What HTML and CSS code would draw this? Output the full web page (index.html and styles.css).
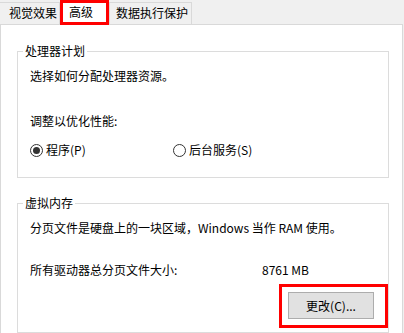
FILE: index.html
```html
<!DOCTYPE html>
<html lang="zh-CN">
<head>
    <meta charset="UTF-8">
    <meta name="viewport" content="width=device-width, initial-scale=1.0">
    <title>性能选项 - 高级</title>
    <link rel="stylesheet" href="styles.css">
</head>
<body>
    <div class="dialog">
        <div class="tabs">
            <div class="tab first">视觉效果</div>
            <div class="tab active">高级</div>
            <div class="tab">数据执行保护</div>
        </div>
        <div class="panel">
            <fieldset class="group cpu">
                <legend>处理器计划</legend>
                <div class="group-body">
                    <div class="line">选择如何分配处理器资源。</div>
                    <div class="line spaced">调整以优化性能:</div>
                    <div class="radios">
                        <label class="radio"><input type="radio" name="sched" checked><span>程序(P)</span></label>
                        <label class="radio"><input type="radio" name="sched"><span>后台服务(S)</span></label>
                    </div>
                </div>
            </fieldset>
            <fieldset class="group memory">
                <legend>虚拟内存</legend>
                <div class="group-body">
                    <div class="line">分页文件是硬盘上的一块区域，Windows 当作 RAM 使用。</div>
                    <div class="line size-row">
                        <span class="size-label">所有驱动器总分页文件大小:</span>
                        <span class="size-value">8761 MB</span>
                    </div>
                    <div class="actions">
                        <div class="highlight">
                            <button class="btn" type="button">更改(C)...</button>
                        </div>
                    </div>
                </div>
            </fieldset>
        </div>
    </div>
</body>
</html>
```

FILE: styles.css
```css
body {
    margin: 0;
    font-family: "Noto Sans CJK SC", "Noto Sans", sans-serif;
    font-size: 12px;
    color: #000;
    background-color: #f0f0f0;
}
.dialog {
    width: 404px;
    height: 333px;
    overflow: hidden;
    background-color: #f0f0f0;
}
.tabs {
    display: flex;
    align-items: flex-end;
    height: 24px;
}
.tab {
    box-sizing: border-box;
    height: 22px;
    line-height: 20px;
    padding: 0 3px 0 6px;
    border: 1px solid #d9d9d9;
    border-bottom: none;
    background-color: #f0f0f0;
    white-space: nowrap;
}
.tab.first {
    padding-left: 9px;
    border-left: none;
    width: 60px;
}
.tab.active {
    position: relative;
    z-index: 1;
    height: 25px;
    margin-bottom: -1px;
    line-height: 17px;
    padding: 0 13px 2px 6px;
    border: 3px solid #f00;
    background-color: #fff;
}
.panel {
    box-sizing: border-box;
    width: 403px;
    height: 330px;
    padding: 18px 13px 0 16px;
    border: 1px solid #d9d9d9;
    background-color: #fff;
}
.group {
    margin: 0;
    padding: 0;
    border: 1px solid #dcdcdc;
    min-width: 0;
}
.group legend {
    margin-left: 5px;
    padding: 0 2px;
    line-height: 16px;
}
.group-body {
    padding: 9px 12px 19px;
}
.memory {
    margin-top: 17px;
}
.memory .group-body {
    padding-bottom: 4px;
}
.line {
    line-height: 16px;
    white-space: nowrap;
}
.line.spaced {
    margin-top: 29px;
}
.radios {
    display: flex;
    margin-top: 13px;
    height: 16px;
}
.radio {
    display: flex;
    align-items: center;
    gap: 3px;
    width: 143px;
    line-height: 16px;
}
.radio input {
    appearance: none;
    box-sizing: border-box;
    width: 13px;
    height: 13px;
    margin: 0;
    border: 1px solid #333;
    border-radius: 50%;
    background-color: #fff;
    display: flex;
    align-items: center;
    justify-content: center;
}
.radio input:checked::after {
    content: "";
    width: 7px;
    height: 7px;
    border-radius: 50%;
    background-color: #333;
}
.size-row {
    display: flex;
    margin-top: 26px;
}
.size-label {
    width: 232px;
}
.actions {
    display: flex;
    justify-content: flex-end;
    margin: 6px -12px 0 0;
}
.highlight {
    padding: 5px 11px 6px 6px;
    border: 3px solid #f00;
}
.btn {
    display: block;
    box-sizing: border-box;
    width: 86px;
    height: 27px;
    margin: 0;
    padding: 0;
    font-family: inherit;
    font-size: 12px;
    color: #000;
    background-color: #e1e1e1;
    border: 1px solid #adadad;
}
```
